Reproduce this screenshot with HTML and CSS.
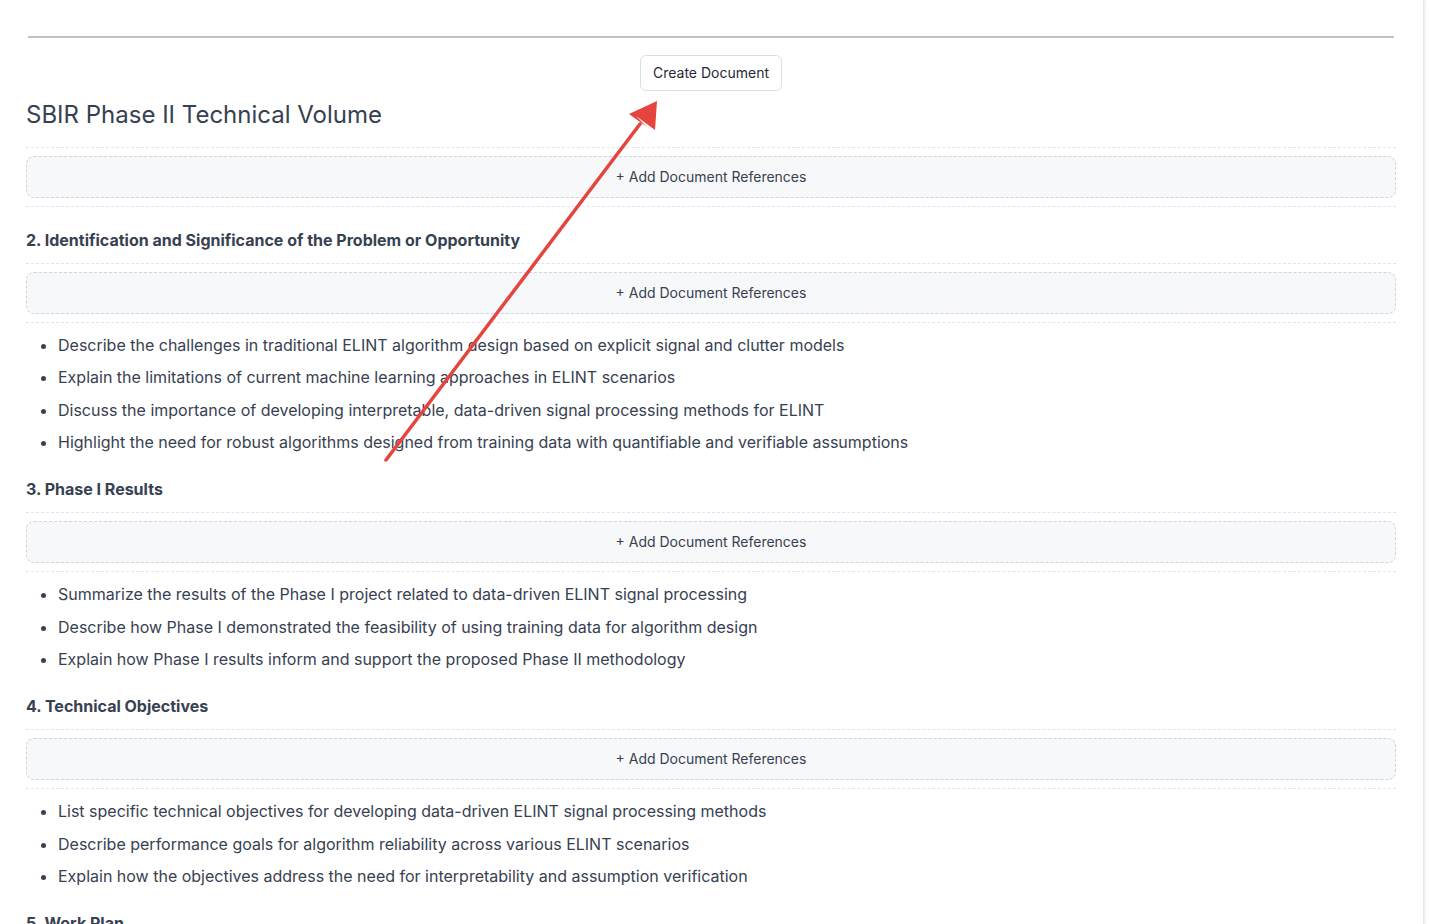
FILE: index.html
```html
<!DOCTYPE html>
<html>
<head>
<meta charset="utf-8">
<link rel="stylesheet" href="styles.css">
</head>
<body>
<div class="page">
  <main class="content">
    <hr class="divider">
    <div class="actions"><button class="btn">Create Document</button></div>
    <h1 class="title">SBIR Phase II Technical Volume</h1>
    <div class="refs"><button class="ref-btn">+ Add Document References</button></div>

    <h2 class="section">2. Identification and Significance of the Problem or Opportunity</h2>
    <div class="refs"><button class="ref-btn">+ Add Document References</button></div>
    <ul class="items">
      <li>Describe the challenges in traditional ELINT algorithm design based on explicit signal and clutter models</li>
      <li>Explain the limitations of current machine learning approaches in ELINT scenarios</li>
      <li>Discuss the importance of developing interpretable, data-driven signal processing methods for ELINT</li>
      <li>Highlight the need for robust algorithms designed from training data with quantifiable and verifiable assumptions</li>
    </ul>

    <h2 class="section">3. Phase I Results</h2>
    <div class="refs"><button class="ref-btn">+ Add Document References</button></div>
    <ul class="items">
      <li>Summarize the results of the Phase I project related to data-driven ELINT signal processing</li>
      <li>Describe how Phase I demonstrated the feasibility of using training data for algorithm design</li>
      <li>Explain how Phase I results inform and support the proposed Phase II methodology</li>
    </ul>

    <h2 class="section">4. Technical Objectives</h2>
    <div class="refs"><button class="ref-btn">+ Add Document References</button></div>
    <ul class="items">
      <li>List specific technical objectives for developing data-driven ELINT signal processing methods</li>
      <li>Describe performance goals for algorithm reliability across various ELINT scenarios</li>
      <li>Explain how the objectives address the need for interpretability and assumption verification</li>
    </ul>

    <h2 class="section">5. Work Plan</h2>
    <div class="refs"><button class="ref-btn">+ Add Document References</button></div>
  </main>
</div>
<svg class="arrow" width="1429" height="924" viewBox="0 0 1429 924">
  <line x1="386" y1="460" x2="640" y2="124" stroke="#e5443f" stroke-width="3.5" stroke-linecap="round"/>
  <polygon points="657,101 655,130 636,116 647,127 629,114" fill="#e5443f"/>
</svg>
</body>
</html>
```
FILE: styles.css
```css
html, body {
  margin: 0;
  padding: 0;
  background: #ffffff;
}
body {
  font-family: Inter, "Noto Sans", "Liberation Sans", sans-serif;
  color: #374151;
  overflow: hidden;
  height: 924px;
}
.page {
  width: 1423px;
  height: 924px;
  border-right: 1px solid #e6e8f0;
  box-shadow: 1px 0 2px rgba(200, 205, 225, 0.5);
  overflow: hidden;
}
.content {
  padding: 36px 27px 0 26px;
}
.divider {
  margin: 0 2px;
  border: 0;
  border-top: 2px solid #c2c2c2;
  height: 0;
}
.actions {
  display: flex;
  justify-content: center;
  margin-top: 17px;
}
.btn {
  font-family: Inter, "Noto Sans", sans-serif;
  font-size: 14px;
  line-height: 16px;
  color: #1f2937;
  background: #fff;
  border: 1px solid #dcdfe4;
  border-radius: 6px;
  height: 36px;
  padding: 0 12px 1px;
  cursor: pointer;
}
.title {
  font-size: 24px;
  font-weight: 400;
  line-height: 32px;
  margin: 8px 0 16px 0;
  color: #374151;
}
.refs {
  border-top: 1px dashed #e1e4ea;
  border-bottom: 1px dashed #e1e4ea;
  padding: 8px 0;
}
.ref-btn {
  display: block;
  width: 100%;
  height: 42px;
  padding: 0 0 1px;
  line-height: 16px;
  background: #f7f8fa;
  border: 1px dashed #cfd4de;
  border-radius: 8px;
  font-family: Inter, "Noto Sans", sans-serif;
  font-size: 14px;
  color: #374151;
  cursor: pointer;
}
.section {
  font-size: 16px;
  font-weight: 650;
  line-height: 24px;
  margin: 21px 0 11px 0;
  color: #374151;
}
.items + .section {
  margin-top: 23.5px;
}
.items {
  margin: 10px 0 0 0;
  padding-left: 32px;
  font-size: 16px;
  line-height: 24px;
}
.items li {
  margin-bottom: 8.25px;
}
.arrow {
  position: absolute;
  left: 0;
  top: 0;
  pointer-events: none;
}
```
